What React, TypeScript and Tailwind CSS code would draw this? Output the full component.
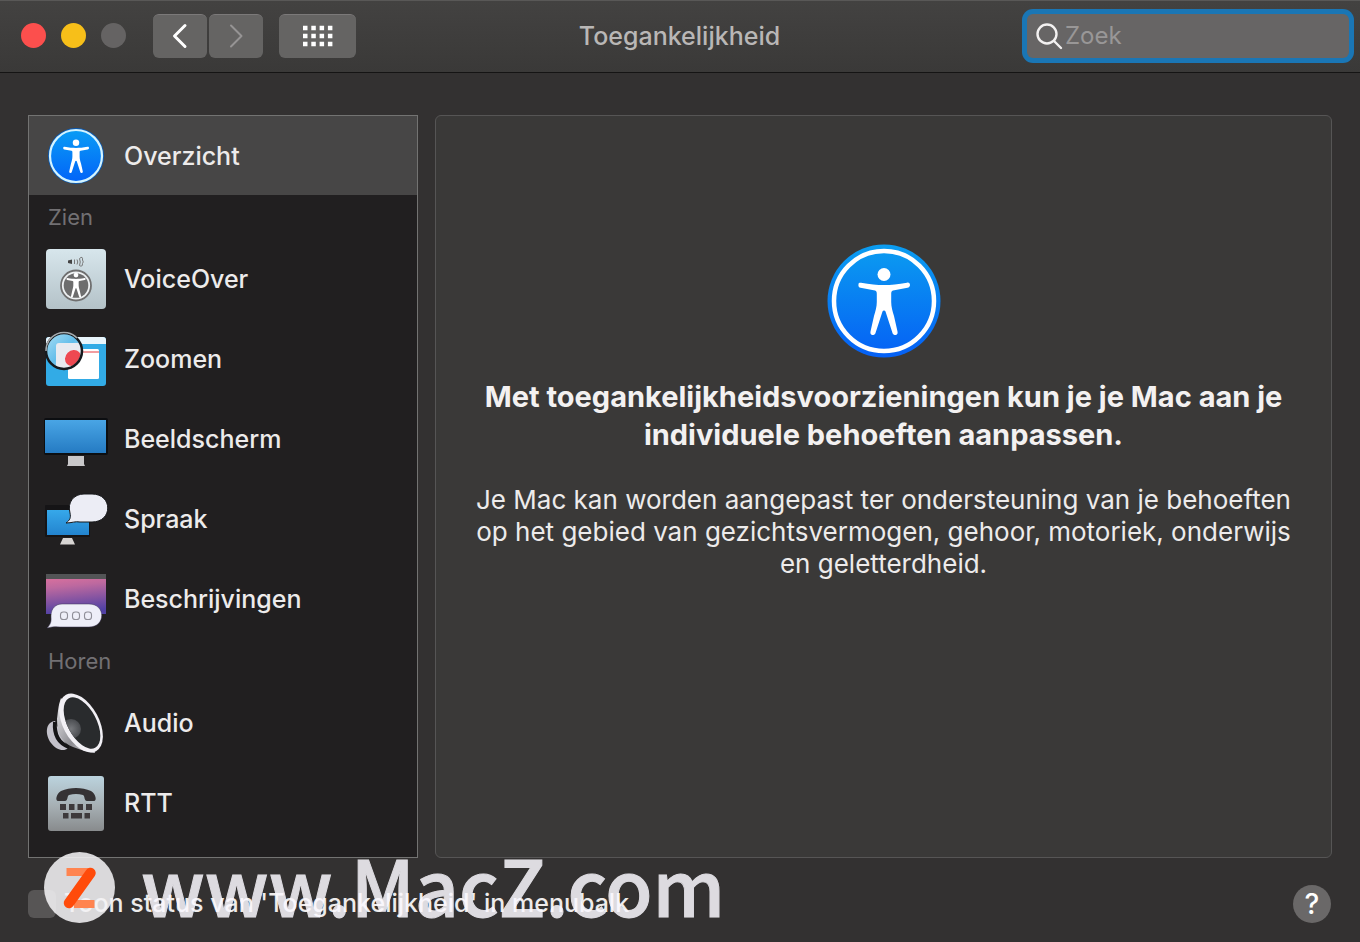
import type { ReactNode } from "react";

function Person() {
  return (
    <>
      <circle cx="57" cy="30.500" r="6.500" fill="#fff" />
      <path
        d="M31.500 40C31.500 39 32.500 38.500 34 38.700C43 40.500 50 41 57 41S71 40.500 80 38.700C82 38.300 83 39.500 83 41C83 42.500 82 43.500 80.500 43.800L66 46.500C64.500 47 64.200 48 64.200 50V58C64.200 63 65.500 67 67 72L70.500 87.500C71 89.500 70 91 68.500 91C67 91 66 90.500 65.500 89L58.500 67.500C58 66 56 66 55.500 67.500L48.500 89C48 90.500 47 91 45.500 91C44 91 43 89.500 43.500 87.500L47 72C48.500 67 49.800 63 49.800 58V50C49.800 48 49.500 47 48 46.500L33.500 43.800C32 43.500 31 42.500 31.500 40Z"
        fill="#fff"
      />
    </>
  );
}

function AccessibilityLarge() {
  return (
    <svg viewBox="0 0 114 114" className="size-[114px]" aria-hidden="true">
      <defs>
        <linearGradient id="blue-large" x1="0" y1="0" x2="0" y2="1">
          <stop offset="0" stopColor="#0b9df0" />
          <stop offset="1" stopColor="#0560f5" />
        </linearGradient>
      </defs>
      <circle cx="57" cy="57" r="56.500" fill="url(#blue-large)" />
      <circle cx="57" cy="57" r="50" fill="none" stroke="#fff" strokeWidth="4.500" />
      <Person />
    </svg>
  );
}

function OverviewIcon() {
  return (
    <svg viewBox="0 0 64 64" className="size-16" aria-hidden="true">
      <defs>
        <linearGradient id="blue-small" x1="0" y1="0" x2="0" y2="1">
          <stop offset="0" stopColor="#0a9cf5" />
          <stop offset="1" stopColor="#0264f8" />
        </linearGradient>
      </defs>
      <circle cx="32" cy="32" r="28" fill="#0a5cb8" />
      <circle cx="32" cy="32" r="26" fill="url(#blue-small)" stroke="#d4f4ff" strokeWidth="2.200" />
      <g transform="translate(3.500 3.500) scale(.5)">
        <Person />
      </g>
    </svg>
  );
}

function VoiceOverIcon() {
  return (
    <svg viewBox="0 0 64 64" className="size-16" aria-hidden="true">
      <defs>
        <linearGradient id="tile" x1="0" y1="0" x2="0" y2="1">
          <stop offset="0" stopColor="#d7e6ec" />
          <stop offset="1" stopColor="#b4c2c8" />
        </linearGradient>
      </defs>
      <rect x="2" y="2" width="60" height="60" rx="4" fill="url(#tile)" />
      <path d="M24 13.500L28 12.500V17L24 16Z" fill="#444" />
      <path d="M30.500 12.500V17M33 12.500Q34.500 15 33 17.500" fill="none" stroke="#777" />
      <path d="M35.500 11.500Q39 8.500 38.500 13Q40 15 38.500 16.500Q38.500 20.500 35.500 18.500Q37 15 35.500 11.500Z" fill="none" stroke="#777" />
      <circle cx="32" cy="38.500" r="15" fill="#eef1f2" stroke="#6f6f6f" strokeWidth="1.800" />
      <circle cx="32" cy="38.500" r="12.300" fill="#6d6d6d" />
      <g transform="translate(10.900 16.800) scale(.37)">
        <Person />
      </g>
    </svg>
  );
}

function ZoomIcon() {
  return (
    <svg viewBox="0 0 64 64" className="size-16" aria-hidden="true">
      <defs>
        <linearGradient id="lens" x1="0" y1="0" x2="1" y2="1">
          <stop offset="0" stopColor="#a9def4" />
          <stop offset=".5" stopColor="#63bdea" />
          <stop offset="1" stopColor="#e5f2f8" />
        </linearGradient>
        <clipPath id="lens-clip">
          <circle cx="20" cy="24" r="17" />
        </clipPath>
      </defs>
      <rect x="2" y="10" width="60" height="49" rx="3" fill="#32abe6" />
      <path d="M5 10H59Q62 10 62 13V17H2V13Q2 10 5 10Z" fill="#e9f5fc" />
      <rect x="24" y="22" width="31" height="30" rx="1.500" fill="#fff" />
      <path d="M36 25H55" stroke="#e85b60" strokeWidth="1.200" />
      <circle cx="20" cy="24" r="18" fill="url(#lens)" />
      <g clipPath="url(#lens-clip)">
        <path d="M12 19Q12 16 15 16H40V45H12Z" fill="#e8eaf0" />
        <ellipse cx="29" cy="31" rx="8.500" ry="7.500" transform="rotate(-45 29 31)" fill="#ee4851" />
      </g>
      <circle cx="20" cy="24" r="18" fill="none" stroke="#161a1e" strokeWidth="2.500" />
      <path d="M2 24A18 18 0 0 1 33 11" fill="none" stroke="#a6abae" strokeWidth="1.500" />
    </svg>
  );
}

function DisplayIcon() {
  return (
    <svg viewBox="0 0 64 64" className="size-16" aria-hidden="true">
      <defs>
        <linearGradient id="screen" x1="0" y1="0" x2="0" y2="1">
          <stop offset="0" stopColor="#49a5e5" />
          <stop offset="1" stopColor="#257bc3" />
        </linearGradient>
      </defs>
      <rect x="0" y="11" width="64" height="37" rx="2" fill="#0c0e11" />
      <rect x="1" y="13" width="61" height="33" fill="url(#screen)" />
      <path d="M24 49H40V57L41 59H23L24 57Z" fill="#c9c8ca" />
    </svg>
  );
}

function SpeechIcon() {
  return (
    <svg viewBox="0 0 64 64" className="size-16" aria-hidden="true">
      <defs>
        <linearGradient id="speech-screen" x1="0" y1="0" x2="0" y2="1">
          <stop offset="0" stopColor="#36a8ea" />
          <stop offset="1" stopColor="#2384cf" />
        </linearGradient>
      </defs>
      <rect x="1" y="18" width="45" height="32" rx="1" fill="#151416" />
      <rect x="3" y="23" width="42" height="25" fill="url(#speech-screen)" />
      <path d="M19 51H28L31 57.500H16Z" fill="#d7d4d3" />
      <path d="M40 7H48C69 7 69 35 48 35H36C31 34 28 36 22 36C26 33 27 31 26 26C23 15 30 7 40 7Z" fill="#ecedf5" stroke="#17181b" />
    </svg>
  );
}

function CaptionsIcon() {
  return (
    <svg viewBox="0 0 64 64" className="size-16" aria-hidden="true">
      <defs>
        <linearGradient id="sunset" x1="0" y1="0" x2=".15" y2="1">
          <stop offset="0" stopColor="#e5739d" />
          <stop offset=".35" stopColor="#bd699f" />
          <stop offset="1" stopColor="#5241a4" />
        </linearGradient>
      </defs>
      <rect x="2" y="7" width="60" height="40" fill="url(#sunset)" />
      <rect x="2" y="7" width="60" height="5" fill="#535456" />
      <path d="M18 37H45C62 37 62 60 45 60H18C14 60 11 59 3 61C8 56 7 53 7 49C7 41 12 37 18 37Z" fill="#eeeef8" stroke="#383150" strokeWidth=".5" />
      <g fill="none" stroke="#8f8e98" strokeWidth="1.100">
        <rect x="16.500" y="45" width="7" height="7.500" rx="2.800" />
        <rect x="28.500" y="45" width="7" height="7.500" rx="2.800" />
        <rect x="40.500" y="45" width="7" height="7.500" rx="2.800" />
      </g>
    </svg>
  );
}

function AudioIcon() {
  return (
    <svg viewBox="0 0 64 64" className="size-16" aria-hidden="true">
      <defs>
        <linearGradient id="cone" x1="0" y1="0" x2="1" y2="1">
          <stop offset="0" stopColor="#f1f0f4" />
          <stop offset=".6" stopColor="#8c8b91" />
          <stop offset="1" stopColor="#d7d6dc" />
        </linearGradient>
        <radialGradient id="speaker-cap">
          <stop offset="0" stopColor="#77797d" />
          <stop offset="1" stopColor="#4a4c50" />
        </radialGradient>
        <clipPath id="membrane-clip">
          <ellipse cx="38" cy="32" rx="14.500" ry="28" transform="rotate(-28 38 32)" />
        </clipPath>
      </defs>
      <path d="M11 30C1 31 1 44 7 52C12 59 20 61 24 57Z" fill="#c4c2cb" />
      <path d="M11 31C10 43 14 52 25 56" fill="none" stroke="#151416" strokeWidth="4" />
      <path d="M17 7C14 15 14 22 13 28C13 43 18 52 29 56C37 59 43 61 51 62L40 31Z" fill="url(#cone)" />
      <ellipse cx="37" cy="32" rx="18" ry="32" transform="rotate(-28 37 32)" fill="#f2f0f5" />
      <g clipPath="url(#membrane-clip)">
        <rect width="64" height="64" fill="#292b2d" />
        <circle cx="27" cy="38" r="10" fill="url(#speaker-cap)" />
      </g>
    </svg>
  );
}

function RttIcon() {
  return (
    <svg viewBox="0 0 64 64" className="size-16" aria-hidden="true">
      <defs>
        <linearGradient id="rtt-tile" x1="0" y1="0" x2="0" y2="1">
          <stop offset="0" stopColor="#bbd3de" />
          <stop offset=".55" stopColor="#a6afb3" />
          <stop offset="1" stopColor="#888b8d" />
        </linearGradient>
      </defs>
      <rect x="4" y="5" width="56" height="55" rx="3" fill="url(#rtt-tile)" />
      <path d="M14 30C11 30 12 23 17 20C26 16 38 16 47 20C52 23 53 30 50 30H43C40 30 41 25 39 24Q32 22 25 24C23 25 24 30 21 30Z" fill="#353234" />
      <g fill="#3d393b">
        <path d="M16 33H22V39H16ZM25 33H30.500V39H25ZM33.500 33H39V39H33.500ZM42 33H48V39H42Z" />
        <path d="M19 42H24.500V47.500H19ZM27 42H38V47.500H27ZM40.500 42H46V47.500H40.500Z" />
      </g>
    </svg>
  );
}

interface Item {
  label: string;
  icon: ReactNode;
}

const VISION: Item[] = [
  { label: "VoiceOver", icon: <VoiceOverIcon /> },
  { label: "Zoomen", icon: <ZoomIcon /> },
  { label: "Beeldscherm", icon: <DisplayIcon /> },
  { label: "Spraak", icon: <SpeechIcon /> },
  { label: "Beschrijvingen", icon: <CaptionsIcon /> },
];

const HEARING: Item[] = [
  { label: "Audio", icon: <AudioIcon /> },
  { label: "RTT", icon: <RttIcon /> },
];

function SidebarRow({ label, icon }: Item) {
  return (
    <li>
      <button type="button" className="flex h-20 w-full items-center gap-4 px-[15px] text-left text-[25px] font-medium">
        {icon}
        <span className="pt-[2px]">{label}</span>
      </button>
    </li>
  );
}

function Section({ title, items }: { title: string; items: Item[] }) {
  return (
    <section>
      <h2 className="h-11 px-[19px] pt-1 text-[22px] leading-9 text-[#727073]">{title}</h2>
      <ul>
        {items.map((item) => (
          <SidebarRow key={item.label} {...item} />
        ))}
      </ul>
    </section>
  );
}

function Toolbar() {
  return (
    <header className="flex h-[73px] items-center border-t border-b border-t-[#595857] border-b-[#151414] bg-linear-to-b from-[#434241] to-[#3a3938] pr-[11px] pb-[2px] pl-[21px]">
      <div className="flex gap-[15px]">
        <button type="button" aria-label="Sluit" className="size-[25px] rounded-full bg-[#fc4f4d]" />
        <button type="button" aria-label="Minimaliseer" className="size-[25px] rounded-full bg-[#f7bf19]" />
        <button type="button" aria-label="Vergroot" disabled className="size-[25px] rounded-full bg-[#656363]" />
      </div>
      <nav className="ml-[27px] flex gap-[2px]">
        <button type="button" aria-label="Vorige" className="flex h-11 w-[54px] items-center justify-center rounded-md border-t border-[#7b7979] bg-[#656463]">
          <svg viewBox="0 0 16 26" className="h-[26px] w-4" fill="none" stroke="#fff" strokeWidth="3" strokeLinecap="round" strokeLinejoin="round">
            <path d="M13 2.500L2.500 13L13 23.500" />
          </svg>
        </button>
        <button type="button" aria-label="Volgende" disabled className="flex h-11 w-[54px] items-center justify-center rounded-md border-t border-[#7b7979] bg-[#656463]">
          <svg viewBox="0 0 16 26" className="h-[26px] w-4" fill="none" stroke="#969494" strokeWidth="2" strokeLinecap="round" strokeLinejoin="round">
            <path d="M3 2.500L13.500 13L3 23.500" />
          </svg>
        </button>
      </nav>
      <button type="button" aria-label="Toon alles" className="ml-4 flex h-11 w-[77px] items-center justify-center rounded-md border-t border-[#7b7979] bg-[#656463]">
        <svg viewBox="0 0 30 22" className="h-[22px] w-[30px]" stroke="#fff" strokeWidth="4.500" strokeDasharray="4.500 3.800">
          <path d="M0 3H30M0 11H30M0 19H30" />
        </svg>
      </button>
      <h1 className="min-w-0 flex-1 pt-[2px] pr-6 text-center text-[25px] font-medium text-[#b9b7b6]">Toegankelijkheid</h1>
      <label className="flex h-11 w-[322px] items-center rounded-md bg-[#676565] pl-2 ring-[5px] ring-[#1a76b5]">
        <svg viewBox="0 0 28 28" className="size-7 shrink-0" fill="none" stroke="#f3f1f1" strokeWidth="2.400" strokeLinecap="round" aria-hidden="true">
          <circle cx="12" cy="12" r="9.500" />
          <path d="M19 19L26 26" />
        </svg>
        <input type="text" aria-label="Zoek" placeholder="Zoek" className="min-w-0 flex-1 bg-transparent pl-[2px] text-2xl text-white outline-none placeholder:text-[#999797]" />
      </label>
    </header>
  );
}

function Watermark() {
  return (
    <div className="pointer-events-none absolute bottom-[15px] left-11 flex items-center gap-[26px]">
      <svg viewBox="0 0 71 71" className="size-[71px]" aria-hidden="true">
        <circle cx="35.500" cy="35.500" r="35.500" fill="#f4f2f5" opacity=".87" />
        <path d="M22.500 20H48" stroke="#ff8450" strokeWidth="8" />
        <path d="M30 52H50.500" stroke="#ff8450" strokeWidth="8" />
        <path d="M46.500 21L25 51" stroke="#ff4b0a" strokeWidth="10.500" strokeLinecap="round" />
      </svg>
      <span className="pb-2 font-['Noto_Sans_CJK_SC',sans-serif] text-[77px] leading-[71px] font-medium whitespace-nowrap text-[#fbf9ff] opacity-85 [-webkit-text-stroke:1px_#fbf9ff]">
        www.MacZ.com
      </span>
    </div>
  );
}

export default function App() {
  return (
    <div className="relative flex min-h-screen flex-col bg-[#333131] font-['Inter',sans-serif] text-[#edebeb]">
      <Toolbar />
      <main className="flex flex-1 gap-[17px] px-7 pt-[42px]">
        <aside className="w-[390px] shrink-0 border border-[#737372] bg-[#211f20]">
          <button type="button" aria-current="page" className="flex h-[79px] w-full items-center gap-4 bg-[#474646] px-[15px] text-left text-[25px] font-medium">
            <OverviewIcon />
            <span className="pt-[2px]">Overzicht</span>
          </button>
          <Section title="Zien" items={VISION} />
          <Section title="Horen" items={HEARING} />
        </aside>
        <section className="flex min-w-0 flex-1 flex-col items-center rounded-md border border-[#565555] bg-[#3a3938] px-8 pt-32 text-center">
          <AccessibilityLarge />
          <h2 className="mt-5 text-[29px] leading-[38px] font-bold text-[#f3f1f1]">
            Met toegankelijkheidsvoorzieningen kun je je Mac aan je
            <br />
            individuele behoeften aanpassen.
          </h2>
          <p className="mt-[30px] text-[26px] leading-8">
            Je Mac kan worden aangepast ter ondersteuning van je behoeften
            <br />
            op het gebied van gezichtsvermogen, gehoor, motoriek, onderwijs
            <br />
            en geletterdheid.
          </p>
        </section>
      </main>
      <footer className="flex h-[84px] items-center justify-between pt-2 pr-[29px] pl-7">
        <label className="flex items-center gap-2 text-[25px] font-medium whitespace-nowrap">
          <input type="checkbox" className="size-7 appearance-none rounded-md bg-[#575555]" />
          Toon status van 'Toegankelijkheid' in menubalk
        </label>
        <button type="button" aria-label="Help" className="size-[38px] rounded-full bg-[#6a6868] text-[28px] leading-[38px] font-medium text-white">
          ?
        </button>
      </footer>
      <Watermark />
    </div>
  );
}
